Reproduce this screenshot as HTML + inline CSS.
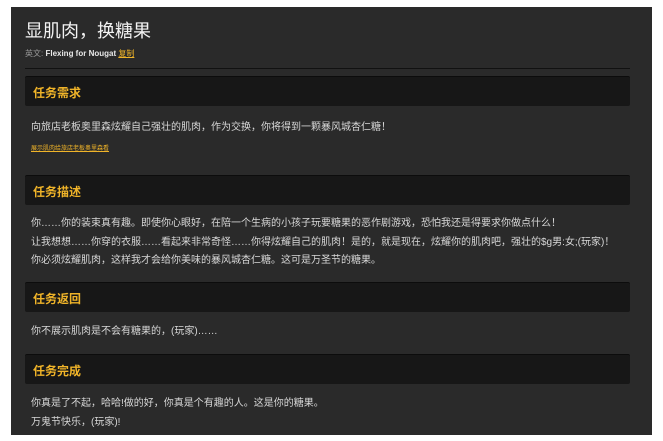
<!DOCTYPE html><html><head><meta charset="utf-8"><style>
body{margin:0;background:#fff;width:663px;height:441px;position:relative;font-family:"Liberation Sans","Noto Sans CJK SC",sans-serif;overflow:hidden}
.p{position:absolute;left:11px;top:7px;width:641px;height:428px;background:#2a2a2a}
.a{position:absolute;white-space:nowrap}
.h{position:absolute;left:14px;width:605px;height:29px;background:#171717;border-radius:2px;border-top:1px solid #0c0c0c}
.h span{position:absolute;left:8px;top:7px;color:#f0b429;font-size:12px;font-weight:bold}
.t{color:#d8d8d8;font-size:10px;left:20px}
</style></head><body><div class="p">
<div class="a" style="left:14px;top:10px;color:#f2f2f2;font-size:18px">显肌肉，换糖果</div>
<div class="a" style="left:14px;top:41px;font-size:8px;color:#999">英文: <b style="color:#e8e8e8">Flexing for Nougat</b> <span style="color:#f0b429;text-decoration:underline">复制</span></div>
<div class="a" style="left:14px;top:61px;width:605px;height:1px;background:#111"></div>
<div class="h" style="top:69px"><span>任务需求</span></div>
<div class="a t" style="top:111px">向旅店老板奥里森炫耀自己强壮的肌肉，作为交换，你将得到一颗暴风城杏仁糖！</div>
<div class="a" style="left:20px;top:136px;font-size:6px;color:#f0b429;text-decoration:underline">展示肌肉给旅店老板奥里森看</div>
<div class="h" style="top:168px"><span>任务描述</span></div>
<div class="a t" style="top:208px;line-height:18.5px">你……你的装束真有趣。即使你心眼好，在陪一个生病的小孩子玩要糖果的恶作剧游戏，恐怕我还是得要求你做点什么！<br>让我想想……你穿的衣服……看起来非常奇怪……你得炫耀自己的肌肉！是的，就是现在，炫耀你的肌肉吧，强壮的$g男:女;(玩家)！<br>你必须炫耀肌肉，这样我才会给你美味的暴风城杏仁糖。这可是万圣节的糖果。</div>
<div class="h" style="top:275px"><span>任务返回</span></div>
<div class="a t" style="top:315px">你不展示肌肉是不会有糖果的，(玩家)……</div>
<div class="h" style="top:347px"><span>任务完成</span></div>
<div class="a t" style="top:388px;line-height:18.5px">你真是了不起，哈哈!做的好，你真是个有趣的人。这是你的糖果。<br>万鬼节快乐，(玩家)!</div>
</div></body></html>
